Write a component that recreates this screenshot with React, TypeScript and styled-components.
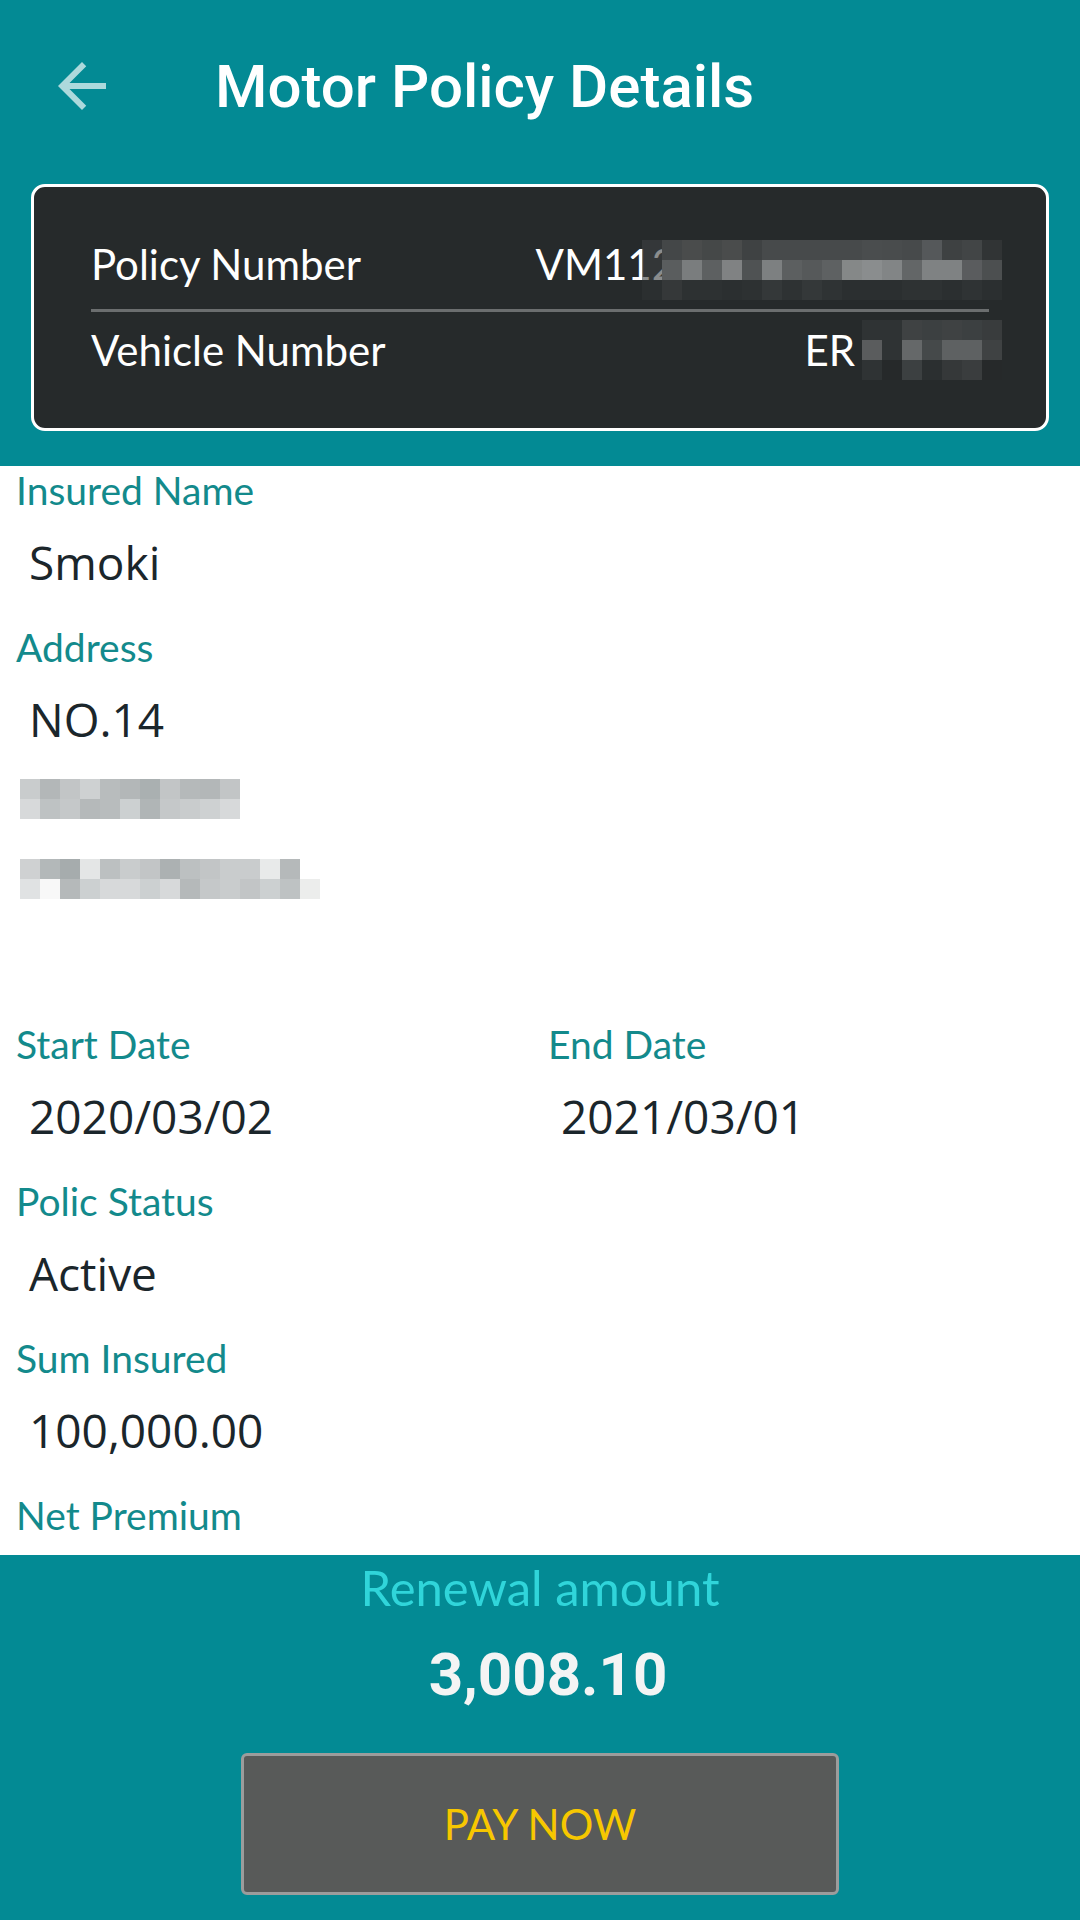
import React from 'react'
import styled, { createGlobalStyle } from 'styled-components'

const GlobalStyle = createGlobalStyle`
  html, body {
    margin: 0;
    padding: 0;
    background: #ffffff;
  }
  * {
    box-sizing: border-box;
  }
`

const Page = styled.div`
  width: 1080px;
  height: 1920px;
  display: flex;
  flex-direction: column;
  overflow: hidden;
  background: #ffffff;
`

const Header = styled.div`
  background: #038a94;
  padding: 0 31px 35px;
`

const TopBar = styled.div`
  height: 172px;
  display: flex;
  align-items: center;
  margin-left: 15px;
`

const BackButton = styled.button`
  width: 72px;
  height: 72px;
  padding: 0;
  border: none;
  background: transparent;
  display: flex;
  align-items: center;
  justify-content: center;
  color: rgba(255, 255, 255, 0.68);
`

const Title = styled.h1`
  margin: 0 0 0 97px;
  font-family: Roboto, 'Liberation Sans', sans-serif;
  font-weight: 500;
  font-size: 60px;
  color: #ffffff;
  letter-spacing: 0;
`

const PolicyCard = styled.div`
  margin-top: 12px;
  height: 247px;
  border: 3px solid #ffffff;
  border-radius: 14px;
  background: #262a2b;
  padding: 37px 57px 0;
`

const CardRow = styled.div`
  height: 80px;
  display: flex;
  align-items: center;
  justify-content: space-between;
  font-family: Lato, 'Liberation Sans', sans-serif;
  font-size: 42px;
  color: #ffffff;
`

const CardDivider = styled.div`
  height: 3px;
  margin: 5px 0 -2px;
  background: #6b6e6f;
`

const CardValue = styled.div`
  display: flex;
  align-items: center;
  margin-right: -13px;
`

const MosaicGrid = styled.div<{ cols: number; overlap?: number; drop?: number }>`
  display: grid;
  grid-template-columns: repeat(${({ cols }) => cols}, 20px);
  grid-auto-rows: 20px;
  margin-left: ${({ overlap }) => (overlap ? -overlap : 0)}px;
  margin-top: ${({ drop }) => (drop ? drop * 2 : 0)}px;
  position: relative;
`

const MosaicCell = styled.div``

const Body = styled.div`
  flex: 1;
  overflow: hidden;
  padding: 0 14px;
`

const Field = styled.div`
  margin-bottom: 21px;
`

const FieldPair = styled.div`
  display: grid;
  grid-template-columns: 532px 1fr;
`

const Label = styled.div`
  height: 48px;
  line-height: 48px;
  font-family: Lato, 'Liberation Sans', sans-serif;
  font-size: 39px;
  color: #138a8c;
  padding-left: 2px;
`

const Value = styled.div`
  margin-top: 8px;
  padding-left: 15px;
  font-family: 'Open Sans', 'Noto Sans', sans-serif;
  font-size: 46px;
  line-height: 80px;
  color: #1b262b;
`

const ValueLine = styled.div`
  height: 80px;
  display: flex;
  align-items: center;
`

const Footer = styled.div`
  height: 365px;
  background: #038a94;
  display: flex;
  flex-direction: column;
  align-items: center;
`

const RenewalLabel = styled.div`
  margin-top: 6px;
  height: 52px;
  line-height: 52px;
  font-family: Lato, 'Liberation Sans', sans-serif;
  font-size: 49px;
  color: #30d5da;
`

const Amount = styled.div`
  margin-top: 26px;
  padding-left: 16px;
  height: 72px;
  line-height: 72px;
  font-family: Roboto, 'Liberation Sans', sans-serif;
  font-weight: 700;
  font-size: 60px;
  color: #f4f4f4;
`

const PayButton = styled.button`
  margin-top: 42px;
  width: 598px;
  height: 142px;
  background: #585a59;
  border: 3px solid #9c9c9c;
  border-radius: 6px;
  font-family: Lato, 'Liberation Sans', sans-serif;
  font-size: 42px;
  color: #f7c700;
  letter-spacing: 0;
`

type Shades = string[][]

const policyShades: Shades = [
  ['3e414299', '444748', '4a4c4c', '454848', '4a4c4c', '3f4243', '474a4b', '474a4b', '474a4b', '474a4b', '474a4b', '4a4d4e', '494c4d', '474a4b', '55585a', '3e4142', '424546', '313435'],
  ['3c3f4099', '5a5d5e', '7a7d7e', '5d6061', '808283', '4f5253', '7d8081', '5c5f60', '56595a', '5e6162', '858888', '8a8d8e', '828586', '636667', '7f8283', '7f8283', '5a5c5e', '4c4f50'],
  ['2f333499', '353839', '2d3132', '2d3132', '2b2f30', '2d3132', '343839', '2e3233', '343839', '2f3334', '2b2f30', '2b2f30', '2b2f30', '2e3233', '2e3233', '2b2f30', '2f3334', '2b2f30'],
]

const vehicleShades: Shades = [
  ['2b2f3000', '2f3334', '2f3334', '3f4243', '3c4041', '3f4243', '3c4041', '393c3d'],
  ['26292a00', '5a5c5d', '2f3334', '656869', '45494a', '5e6162', '5e6162', '3f4243'],
  ['2b2f3000', '2f3334', '26292a', '3c4041', '2b2f30', '353839', '3a3d3e', '26292a'],
]

const addressShadesA: Shades = [
  ['c9cccd', 'b3b7b8', 'c2c5c6', 'ced1d2', 'b8bcbd', 'b3b7b8', 'aab0b1', 'c2c5c6', 'b5b9ba', 'b3b7b8', 'c2c5c6'],
  ['d7d9da', 'bec2c3', 'c5c8c9', 'b5b9ba', 'b8bcbd', 'ccd0d1', 'b0b5b6', 'c5c8c9', 'c9cccd', 'ced1d2', 'd7d9da'],
]

const addressShadesB: Shades = [
  ['cfd1d2', 'b3b8b9', 'a6acad', 'e4e6e6', 'bcc0c1', 'c9cccd', 'c2c5c6', 'acb1b2', 'bcc0c1', 'c2c5c6', 'c9cccd', 'c9cccd', 'e8eaea', 'b5b9ba', 'ffffff'],
  ['e0e2e3', 'f8f8f8', 'b5b9ba', 'ccd0d1', 'd7d9da', 'd7d9da', 'ccd0d1', 'd7d9da', 'b5b9ba', 'c5c8c9', 'c9cccd', 'c2c5c6', 'ccd0d1', 'bec2c3', 'ecedec'],
]

// censored blocks, drawn cell by cell from the shade table
function Mosaic({ shades, overlap, drop }: { shades: Shades; overlap?: number; drop?: number }) {
  return (
    <MosaicGrid cols={shades[0].length} overlap={overlap} drop={drop}>
      {shades.flatMap((row, r) =>
        row.map((c, i) => <MosaicCell key={r + '-' + i} style={{ background: '#' + c }} />)
      )}
    </MosaicGrid>
  )
}

function ArrowBack() {
  return (
    <svg width="72" height="72" viewBox="0 0 24 24" fill="currentColor">
      <path d="M20 11H7.83l5.59-5.59L12 4l-8 8 8 8 1.41-1.41L7.83 13H20v-2z" />
    </svg>
  )
}

export default function App() {
  return (
    <Page>
      <GlobalStyle />
      <Header>
        <TopBar>
          <BackButton aria-label="Back">
            <ArrowBack />
          </BackButton>
          <Title>Motor Policy Details</Title>
        </TopBar>
        <PolicyCard>
          <CardRow>
            <span>Policy Number</span>
            <CardValue>
              <span>VM112</span>
              <Mosaic shades={policyShades} overlap={34} drop={6} />
            </CardValue>
          </CardRow>
          <CardDivider />
          <CardRow>
            <span>Vehicle Number</span>
            <CardValue>
              <span>ER</span>
              <Mosaic shades={vehicleShades} overlap={13} />
            </CardValue>
          </CardRow>
        </PolicyCard>
      </Header>

      <Body>
        <Field>
          <Label>Insured Name</Label>
          <Value>Smoki</Value>
        </Field>
        <Field>
          <Label>Address</Label>
          <Value>
            <ValueLine>NO.14</ValueLine>
            <ValueLine>
              <Mosaic shades={addressShadesA} overlap={9} />
            </ValueLine>
            <ValueLine>
              <Mosaic shades={addressShadesB} overlap={9} />
            </ValueLine>
            <ValueLine />
          </Value>
        </Field>
        <FieldPair>
          <Field>
            <Label>Start Date</Label>
            <Value>2020/03/02</Value>
          </Field>
          <Field>
            <Label>End Date</Label>
            <Value>2021/03/01</Value>
          </Field>
        </FieldPair>
        <Field>
          <Label>Polic Status</Label>
          <Value>Active</Value>
        </Field>
        <Field>
          <Label>Sum Insured</Label>
          <Value>100,000.00</Value>
        </Field>
        <Field>
          <Label>Net Premium</Label>
        </Field>
      </Body>

      <Footer>
        <RenewalLabel>Renewal amount</RenewalLabel>
        <Amount>3,008.10</Amount>
        <PayButton>PAY NOW</PayButton>
      </Footer>
    </Page>
  )
}
